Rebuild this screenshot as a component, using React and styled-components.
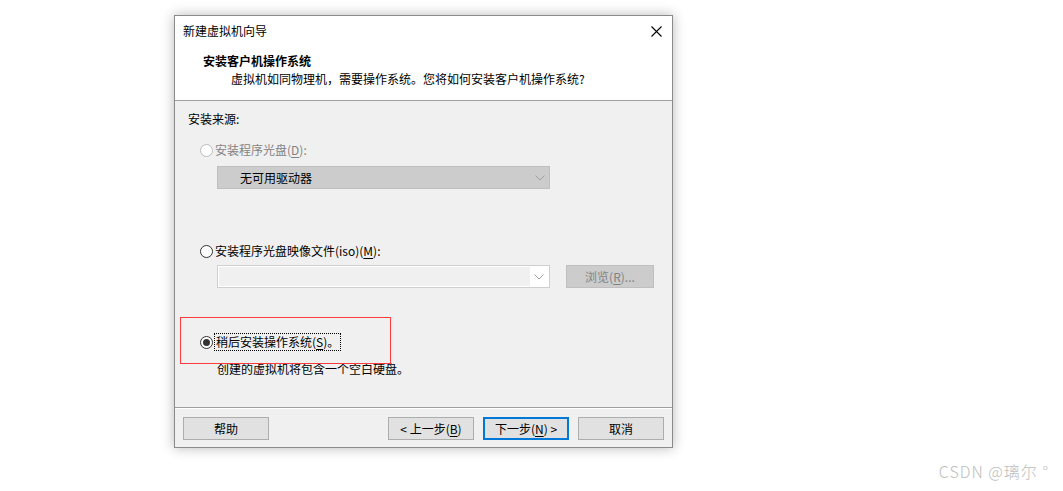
import React from 'react'
import styled, { createGlobalStyle } from 'styled-components'

const GlobalStyle = createGlobalStyle`
  html, body {
    margin: 0;
    padding: 0;
    background: #ffffff;
  }
  body {
    font-family: "Noto Sans CJK SC", "Microsoft YaHei UI", "Noto Sans", sans-serif;
    font-size: 12px;
    color: #000;
  }
`

const Page = styled.div`
  position: relative;
  width: 1063px;
  height: 491px;
  padding: 15px 0 0 174px;
  box-sizing: border-box;
  overflow: hidden;
`

const Window = styled.div`
  position: relative;
  width: 499px;
  height: 433px;
  box-sizing: border-box;
  border: 1px solid #8a8a8a;
  background: #f0f0f0;
  box-shadow: 0 0 12px rgba(0, 0, 0, 0.28);
  display: flex;
  flex-direction: column;
`

const TitleBar = styled.div`
  height: 30px;
  background: #fff;
  display: flex;
  align-items: center;
  justify-content: space-between;
  padding: 0 10px 0 8px;
  line-height: 16px;
`

const Header = styled.div`
  height: 55px;
  background: #fff;
  border-bottom: 1px solid #a0a0a0;
  padding-top: 7px;
  box-sizing: border-box;
  display: flex;
  flex-direction: column;
  gap: 2px;
  line-height: 16px;
`

const Heading = styled.div`
  font-weight: 700;
  padding-left: 28px;
`

const SubHeading = styled.div`
  padding-left: 56px;
`

const Body = styled.div`
  flex: 1;
  position: relative;
  padding: 10px 0 0 13px;
  line-height: 16px;
  border-bottom: 1px solid #a0a0a0;
  box-shadow: 0 1px 0 #fff;
`

const Section = styled.div`
  margin-top: ${p => p.$top}px;
  padding-left: ${p => p.$indent || 0}px;
`

const RadioRow = styled.div`
  display: flex;
  align-items: center;
  color: ${p => (p.$disabled ? '#838383' : '#000')};
`

const RadioCircle = styled.span`
  width: 13px;
  height: 13px;
  box-sizing: border-box;
  border-radius: 50%;
  border: 1px solid ${p => (p.$disabled ? '#bcbcbc' : '#333')};
  background: #fff;
  display: inline-flex;
  align-items: center;
  justify-content: center;
  margin-right: 2px;
  &::after {
    content: '';
    width: 7px;
    height: 7px;
    border-radius: 50%;
    background: ${p => (p.$checked ? '#333' : 'transparent')};
  }
`

const Focus = styled.span`
  outline: 1px dotted #000;
  outline-offset: 0px;
  padding: 0 1px;
`

const Mn = styled.span`
  text-decoration: underline;
  text-underline-offset: 2px;
`

const FieldRow = styled.div`
  display: flex;
  align-items: center;
  gap: 16px;
  margin-top: ${p => p.$top}px;
  padding-left: 29px;
`

const Combo = styled.div`
  width: 333px;
  height: 23px;
  box-sizing: border-box;
  border: 1px solid ${p => (p.$filled ? '#bfbfbf' : '#cfcfcf')};
  background: ${p => (p.$filled ? '#cccccc' : '#fff')};
  display: flex;
  align-items: stretch;
  padding: ${p => (p.$filled ? '0' : '1px')};
`

const ComboText = styled.div`
  flex: 1;
  display: flex;
  align-items: center;
  padding-left: 22px;
  background: ${p => (p.$empty ? '#f0f0f0' : 'transparent')};
`

const ComboArrow = styled.div`
  width: 18px;
  display: flex;
  align-items: center;
  justify-content: center;
`

const Button = styled.button`
  width: ${p => p.$w || 86}px;
  height: 23px;
  box-sizing: border-box;
  border: ${p => (p.$primary ? '2px solid #0078d7' : '1px solid #adadad')};
  background: ${p => (p.$disabled ? '#cccccc' : '#e1e1e1')};
  border-color: ${p => (p.$disabled ? '#bfbfbf' : p.$primary ? '#0078d7' : '#adadad')};
  color: ${p => (p.$disabled ? '#838383' : '#000')};
  font-family: inherit;
  font-size: 12px;
  line-height: 16px;
  padding: 0;
  display: inline-flex;
  align-items: center;
  justify-content: center;
`

const Desc = styled.div`
  margin-top: 11px;
  padding-left: 29px;
`

const Annotation = styled.div`
  position: absolute;
  left: 5px;
  top: 216px;
  width: 211px;
  height: 47px;
  border: 1px solid #ff3b3b;
  box-sizing: border-box;
  pointer-events: none;
`

const Footer = styled.div`
  height: 39px;
  display: flex;
  align-items: flex-start;
  padding: 9px 8px 0 8px;
  box-sizing: border-box;
`

const NavGroup = styled.div`
  margin-left: auto;
  display: flex;
  gap: 9px;
`

const Watermark = styled.div`
  position: absolute;
  right: 14px;
  bottom: 8px;
  font-family: "Noto Sans CJK SC", "Noto Sans", sans-serif;
  font-size: 16px;
  font-weight: 300;
  color: #bdbdbd;
  letter-spacing: 1px;
`

const Chevron = () => (
  <svg width="10" height="6" viewBox="0 0 10 6">
    <path d="M0.5 0.5 L5 5 L9.5 0.5" fill="none" stroke="#a0a0a0" strokeWidth="1" />
  </svg>
)

const CloseIcon = () => (
  <svg width="11" height="11" viewBox="0 0 11 11">
    <path d="M0.5 0.5 L10.5 10.5 M10.5 0.5 L0.5 10.5" stroke="#000" strokeWidth="1.1" />
  </svg>
)

const App = () => (
  <Page>
    <GlobalStyle />
    <Window>
      <TitleBar>
        <span>新建虚拟机向导</span>
        <CloseIcon />
      </TitleBar>
      <Header>
        <Heading>安装客户机操作系统</Heading>
        <SubHeading>虚拟机如同物理机，需要操作系统。您将如何安装客户机操作系统?</SubHeading>
      </Header>
      <Body>
        <div>安装来源:</div>

        <Section $top={15} $indent={12}>
          <RadioRow $disabled>
            <RadioCircle $disabled />
            安装程序光盘(<Mn>D</Mn>):
          </RadioRow>
        </Section>
        <FieldRow $top={8}>
          <Combo $filled>
            <ComboText>无可用驱动器</ComboText>
            <ComboArrow><Chevron /></ComboArrow>
          </Combo>
        </FieldRow>

        <Section $top={54} $indent={12}>
          <RadioRow>
            <RadioCircle />
            安装程序光盘映像文件(iso)(<Mn>M</Mn>):
          </RadioRow>
        </Section>
        <FieldRow $top={6}>
          <Combo>
            <ComboText $empty />
            <ComboArrow><Chevron /></ComboArrow>
          </Combo>
          <Button $disabled $w={88}>浏览(<Mn>R</Mn>)...</Button>
        </FieldRow>

        <Section $top={46} $indent={12}>
          <RadioRow>
            <RadioCircle $checked />
            <Focus>稍后安装操作系统(<Mn>S</Mn>)。</Focus>
          </RadioRow>
        </Section>
        <Desc>创建的虚拟机将包含一个空白硬盘。</Desc>

        <Annotation />
      </Body>
      <Footer>
        <Button>帮助</Button>
        <NavGroup>
          <Button>&lt; 上一步(<Mn>B</Mn>)</Button>
          <Button $primary>下一步(<Mn>N</Mn>) &gt;</Button>
          <Button>取消</Button>
        </NavGroup>
      </Footer>
    </Window>
    <Watermark>CSDN @璃尔 °</Watermark>
  </Page>
)

export default App
